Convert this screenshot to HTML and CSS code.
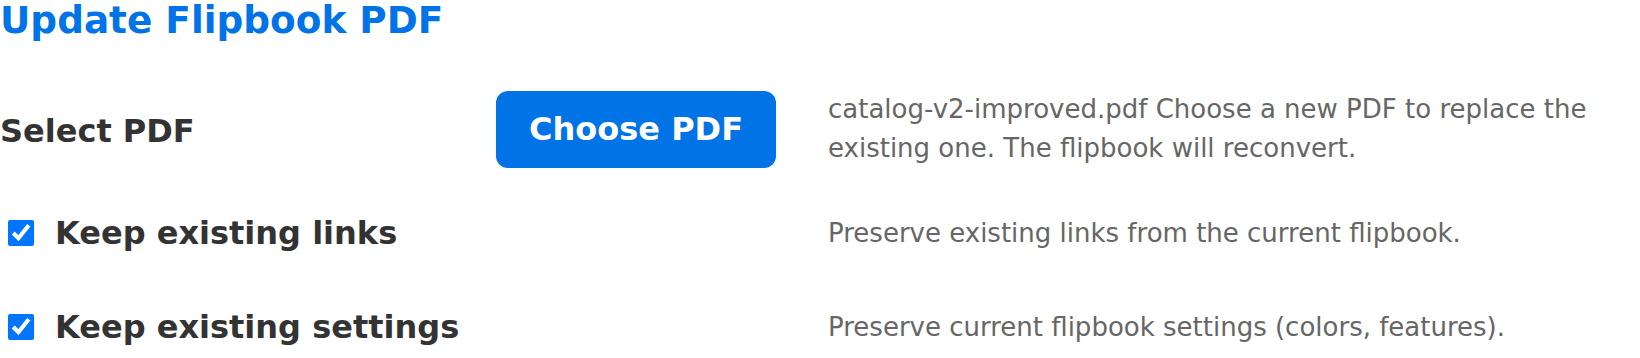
FILE: index.html
```html
<!DOCTYPE html>
<html lang="en">
<head>
  <meta charset="UTF-8">
  <title>Update Flipbook PDF</title>
  <link rel="stylesheet" href="styles.css">
</head>
<body>
  <h1>Update Flipbook PDF</h1>

  <form id="updateForm">
    <div class="field field-file">
      <label class="field-label" for="pdfFile">Select PDF</label>
      <div class="field-control">
        <button type="button" class="btn-choose">Choose PDF</button>
        <input type="file" id="pdfFile" accept="application/pdf" hidden>
      </div>
      <p class="field-help">catalog-v2-improved.pdf Choose a new PDF to replace the existing one. The flipbook will reconvert.</p>
    </div>

    <div class="field field-check first-check">
      <label class="check-label">
        <input type="checkbox" id="keepLinks" checked>
        <span>Keep existing links</span>
      </label>
      <p class="field-help">Preserve existing links from the current flipbook.</p>
    </div>

    <div class="field field-check">
      <label class="check-label">
        <input type="checkbox" id="keepSettings" checked>
        <span>Keep existing settings</span>
      </label>
      <p class="field-help">Preserve current flipbook settings (colors, features).</p>
    </div>
  </form>
</body>
</html>
```

FILE: styles.css
```css
body {
  font-family: "DejaVu Sans", Verdana, sans-serif;
  color: #333;
  background-color: #fff;
  margin: 0;
}
h1 {
  color: #0073e6;
  font-size: 37.4px;
  line-height: 40px;
  margin: 0;
}
.field {
  display: grid;
  grid-template-columns: 496px 332px 1fr;
  align-items: center;
}
.field-file {
  margin-top: 50px;
}
.first-check {
  margin-top: 46px;
}
.field-check + .field-check {
  margin-top: 56px;
}
.field-label {
  font-weight: bold;
  font-size: 32px;
  padding-top: 3px;
}
.btn-choose {
  font-family: inherit;
  font-size: 32px;
  font-weight: bold;
  line-height: 37px;
  color: white;
  background-color: #0073e6;
  border: none;
  border-radius: 12px;
  padding: 20px 33px;
  cursor: pointer;
}
.field-help {
  margin: 0;
  font-size: 26px;
  line-height: 39px;
  color: #666;
}
.field-check .field-help {
  line-height: 30px;
}
.check-label {
  grid-column: 1 / 3;
  display: flex;
  align-items: center;
  gap: 21px;
  font-weight: bold;
  font-size: 32px;
}
.check-label input {
  width: 26px;
  height: 26px;
  margin: 0 0 0 8px;
}
```
